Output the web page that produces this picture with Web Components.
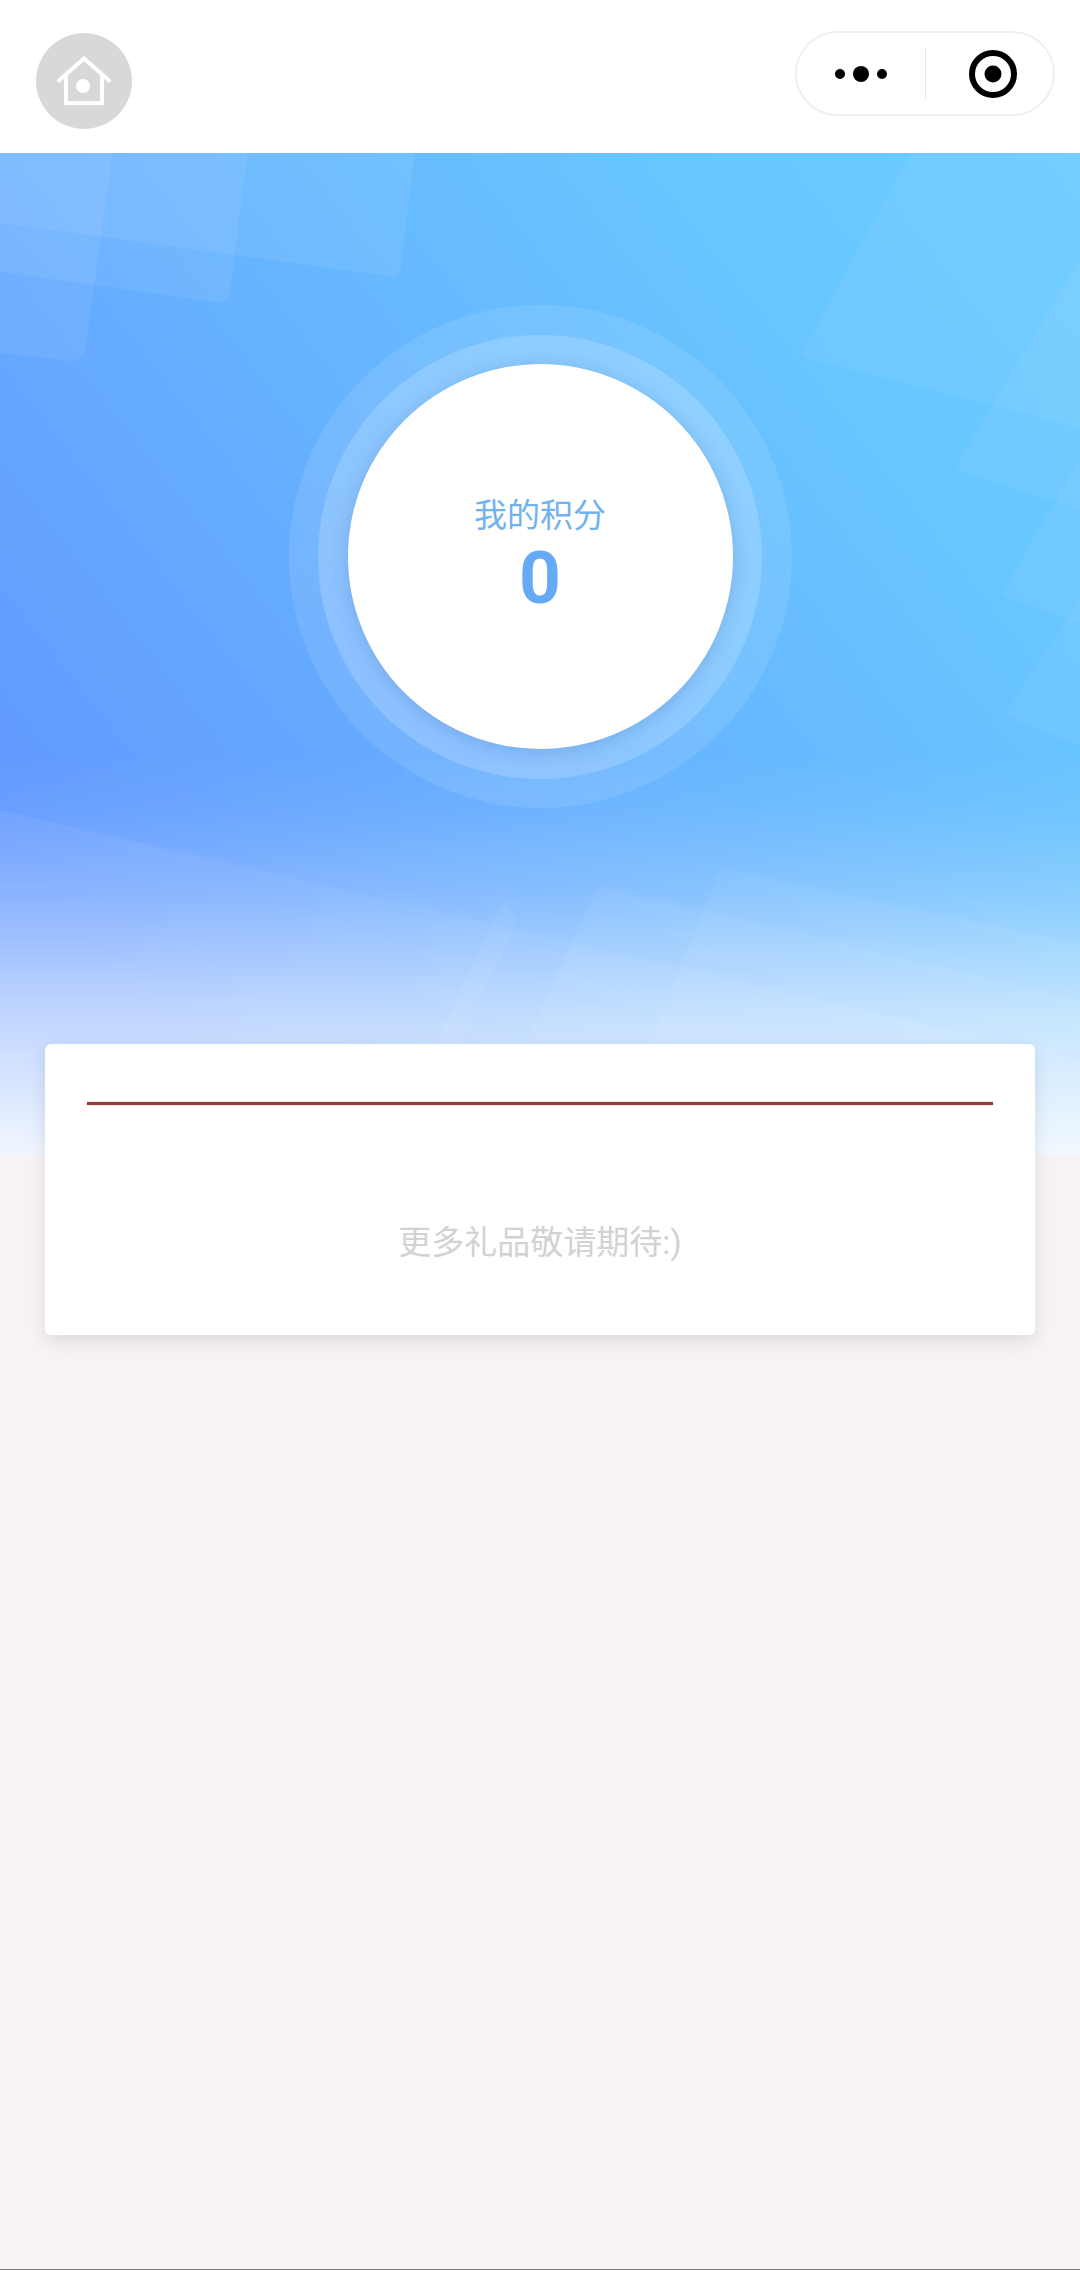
<!DOCTYPE html>
<html lang="zh">
<head>
<meta charset="utf-8">
<title>我的积分</title>
<style>
    html, body {
        margin: 0;
        height: 100%;
    }
    body {
        display: flex;
        flex-direction: column;
        height: 2270px;
        background: #f7f3f4;
        font-family: Roboto, "Noto Sans CJK SC", sans-serif;
        overflow: hidden;
    }
</style>
</head>
<body>
<nav-bar></nav-bar>
<points-hero>
    <points-badge label="我的积分" value="0"></points-badge>
</points-hero>
<gift-card>更多礼品敬请期待:)</gift-card>
<bottom-edge></bottom-edge>

<script>
class NavBar extends HTMLElement {
    constructor () {
        super();
        this.attachShadow({mode: 'open'}).innerHTML = `
<style>
    :host {
        display: flex;
        flex: none;
        justify-content: space-between;
        height: 153px;
        padding: 31px 25px 0 36px;
        box-sizing: border-box;
        background: #fff;
    }
    .home {
        display: flex;
        align-items: center;
        justify-content: center;
        width: 96px;
        height: 96px;
        margin-top: 2px;
        border-radius: 50%;
        background: #d8d8d8;
    }
    .capsule {
        display: flex;
        align-items: center;
        width: 260px;
        height: 85px;
        box-sizing: border-box;
        border: 2px solid #efefef;
        border-radius: 43px;
        background: #fff;
    }
    .more {
        display: flex;
        align-items: center;
        justify-content: center;
        gap: 8px;
        width: 128px;
        height: 51px;
        border-right: 1px solid #e8e8e8;
    }
    .more i {
        width: 10px;
        height: 10px;
        border-radius: 50%;
        background: #000;
    }
    .more i:nth-child(2) {
        width: 16px;
        height: 16px;
    }
    .target {
        display: flex;
        flex: 1;
        justify-content: center;
        padding-left: 7px;
    }
</style>
<div class="home">
    <svg width="54" height="50" viewBox="0 0 54 50" fill="none" stroke="#fff" stroke-width="4">
        <path d="M2 24.5 L27 2.5 L52 24.5" stroke-linecap="round"/>
        <path d="M9 20 V47 H45 V20"/>
        <circle cx="26" cy="30" r="7" fill="#fff" stroke="none"/>
    </svg>
</div>
<div class="capsule">
    <div class="more"><i></i><i></i><i></i></div>
    <div class="target">
        <svg width="50" height="50" viewBox="0 0 50 50">
            <circle cx="25" cy="25" r="21" fill="none" stroke="#000" stroke-width="6"/>
            <circle cx="25" cy="25" r="8.5" fill="#000"/>
        </svg>
    </div>
</div>`;
    }
}

class PointsHero extends HTMLElement {
    constructor () {
        super();
        // shapes are drawn in page coordinates, the group moves them under the nav bar
        this.attachShadow({mode: 'open'}).innerHTML = `
<style>
    :host {
        display: flex;
        flex: none;
        justify-content: center;
        position: relative;
        height: 1002px;
        box-sizing: border-box;
        padding-top: 152px;
        background: linear-gradient(52deg, #6198ff 14%, #66b2ff 48%, #68c6ff 78%, #6ccdff 100%);
        overflow: hidden;
    }
    svg {
        position: absolute;
        left: 0;
        top: 0;
    }
    .fade {
        position: absolute;
        left: 0;
        right: 0;
        bottom: 0;
        height: 400px;
        background: linear-gradient(to bottom, rgba(255,255,255,0), rgba(255,255,255,0.06) 14%, rgba(255,255,255,0.22) 34%, rgba(255,255,255,0.55) 62%, rgba(248,251,255,0.95));
    }
    ::slotted(*) {
        position: relative;
    }
</style>
<svg width="1080" height="1002" viewBox="0 0 1080 1002" fill="#fff">
    <g transform="translate(0,-153)">
        <g fill-opacity="0.065">
            <path d="M0 150 H415 L401 267 Q400 278 389 276 L0 223Z"/>
            <path d="M0 150 H248 L230 292 Q229 304 217 302 L0 272Z"/>
            <path d="M0 150 H113 L85 350 Q83 362 71 361 L0 353Z"/>
        </g>
        <g fill-opacity="0.05">
            <path d="M913 150 H1080 V427 L811 360 Q798 356 805 346Z"/>
            <path d="M1080 260 L960 460 Q954 470 966 473 L1080 509Z"/>
            <path d="M1080 460 L1005 587 Q999 597 1011 600 L1080 623Z"/>
            <path d="M1080 599 L1009 707 Q1003 717 1015 720 L1080 746Z"/>
        </g>
        <g fill-opacity="0.05">
            <path d="M0 810 L1080 1060 V1160 H0Z"/>
            <path d="M730 870 L1080 943 V1160 H600 L716 880 Q719 868 730 870Z"/>
            <path d="M606 887 L1080 1000 V1160 H470 L594 896 Q598 885 606 887Z"/>
            <path d="M510 903 L509 908 Q520 916 514 930 L461 1040 L440 1160 H380 L498 912 Q502 901 510 903Z"/>
        </g>
    </g>
</svg>
<div class="fade"></div>
<slot></slot>`;
    }
}

class PointsBadge extends HTMLElement {
    constructor () {
        super();
        this.attachShadow({mode: 'open'}).innerHTML = `
<style>
    :host {
        display: flex;
        align-items: center;
        justify-content: center;
        width: 503px;
        height: 503px;
        border-radius: 50%;
        background: rgba(255,255,255,0.1);
    }
    .ring {
        display: flex;
        align-items: center;
        justify-content: center;
        width: 444px;
        height: 444px;
        border-radius: 50%;
        background: rgba(255,255,255,0.18);
    }
    .face {
        display: flex;
        flex-direction: column;
        align-items: center;
        width: 385px;
        height: 385px;
        box-sizing: border-box;
        padding-top: 132px;
        border-radius: 50%;
        background: #fff;
        box-shadow: 0 3px 18px rgba(60,110,180,0.3);
    }
    .label {
        font-size: 33px;
        line-height: 40px;
        color: #72b2ef;
    }
    .value {
        margin-top: 12px;
        font-size: 73px;
        line-height: 60px;
        font-weight: 700;
        color: #66aaf5;
    }
</style>
<div class="ring">
    <div class="face">
        <div class="label"></div>
        <div class="value"></div>
    </div>
</div>`;
        this.shadowRoot.querySelector('.label').textContent = this.getAttribute('label');
        this.shadowRoot.querySelector('.value').textContent = this.getAttribute('value');
    }
}

class GiftCard extends HTMLElement {
    constructor () {
        super();
        this.attachShadow({mode: 'open'}).innerHTML = `
<style>
    :host {
        display: block;
        flex: none;
        position: relative;
        height: 291px;
        margin: -111px 45px 0;
        padding: 58px 42px 0;
        box-sizing: border-box;
        border-radius: 6px;
        background: #fff;
        box-shadow: 0 6px 18px rgba(0,0,0,0.1);
    }
    .rule {
        height: 3px;
        background: #913c3a;
        box-shadow: 0 0 2px #eca99a;
    }
    .note {
        margin-top: 118px;
        font-size: 33px;
        line-height: 40px;
        text-align: center;
        color: #d2d2d2;
    }
</style>
<div class="rule"></div>
<div class="note"><slot></slot></div>`;
    }
}

class BottomEdge extends HTMLElement {
    constructor () {
        super();
        this.attachShadow({mode: 'open'}).innerHTML = `
<style>
    :host {
        display: block;
        height: 1px;
        margin-top: auto;
        background: #777;
    }
</style>`;
    }
}

customElements.define('nav-bar', NavBar);
customElements.define('points-hero', PointsHero);
customElements.define('points-badge', PointsBadge);
customElements.define('gift-card', GiftCard);
customElements.define('bottom-edge', BottomEdge);
</script>
</body>
</html>
